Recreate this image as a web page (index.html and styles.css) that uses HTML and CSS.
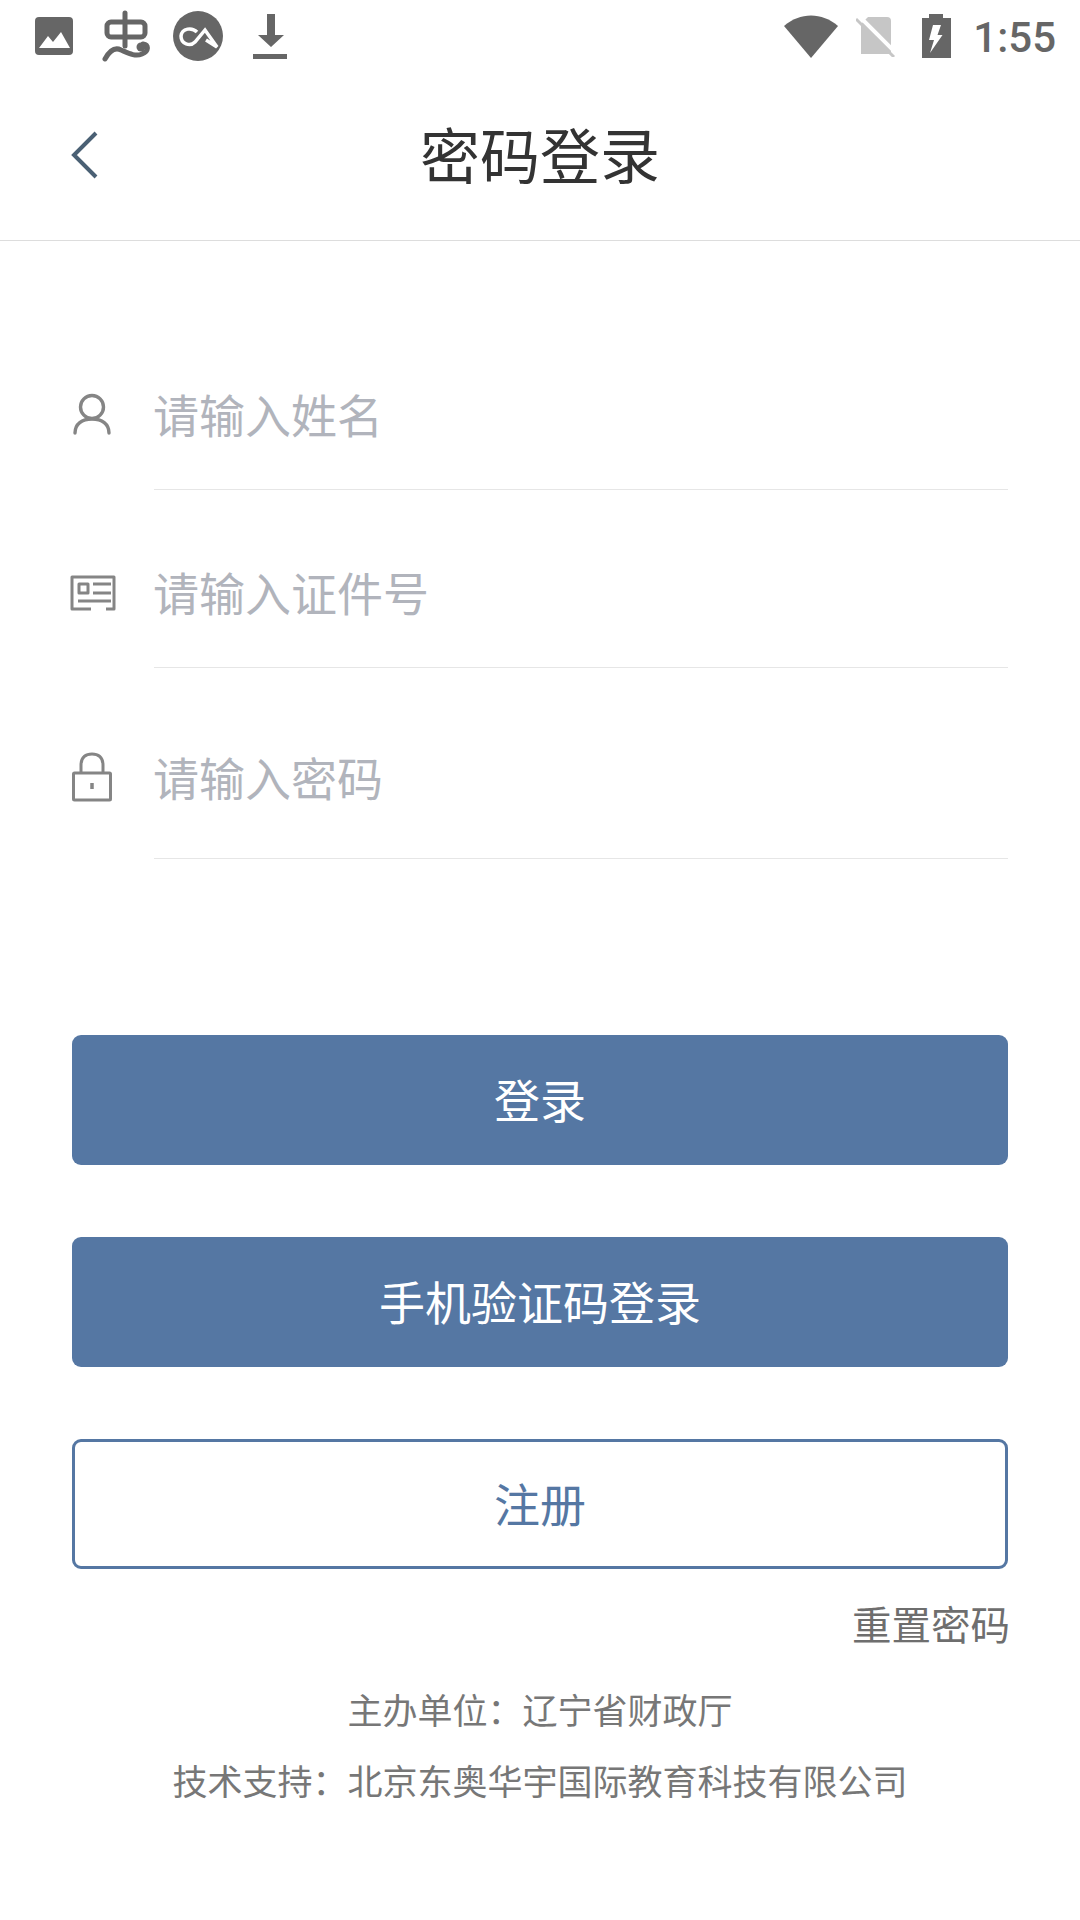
FILE: index.html
```html
<!DOCTYPE html>
<html lang="zh-CN">
<head>
    <meta charset="UTF-8">
    <meta name="viewport" content="width=device-width, initial-scale=1.0">
    <title>密码登录</title>
    <link rel="stylesheet" href="styles.css">
</head>
<body>
    <!-- 状态栏 -->
    <div class="statusbar">
        <div class="status-left">
            <svg class="ic-photo" width="40" height="40" viewBox="0 0 40 40"><rect x="1" y="1" width="38" height="38" rx="4" fill="#666"/><path d="M5 32 L14 20 L19 26 L27 16 L36 32Z" fill="#fff"/></svg>
            <svg class="ic-chong" width="50" height="52" viewBox="0 0 50 52" fill="none" stroke="#666" stroke-width="5" stroke-linecap="round"><rect x="5" y="12" width="38" height="15" rx="4"/><path d="M23 3 V36"/><path d="M3 49 C8 40 13 37 19 40 C26 43 33 47 40 44 C47 41 47 35 41 34"/><circle cx="39" cy="37" r="4.5" fill="#666" stroke="none"/></svg>
            <svg class="ic-ca" width="50" height="50" viewBox="0 0 50 50"><circle cx="25" cy="25" r="25" fill="#666"/><path d="M24 21 C19 16 9 17 8 25 C8 33 17 36 22 31 L32 19 L44 36 L33 29" fill="none" stroke="#fff" stroke-width="3.5"/></svg>
            <svg class="ic-down" width="34" height="45" viewBox="0 0 34 45" fill="#666"><path d="M14 0 H22 V21 H31 L18 33 L5 21 H14 Z"/><rect y="40" width="34" height="5"/></svg>
        </div>
        <div class="status-right">
            <svg class="ic-wifi" width="54" height="43" viewBox="0 0 54 43"><path d="M0 11 C16 -3 38 -3 54 11 L27 43 Z" fill="#666"/></svg>
            <svg class="ic-sim" width="39" height="42" viewBox="0 0 39 42"><path d="M12 2 H31 Q35 2 35 6 V39 H5 V9Z" fill="#c6c6c6"/><path d="M3 1 L41 39" stroke="#fff" stroke-width="4"/><path d="M0 4 L38 42" stroke="#c6c6c6" stroke-width="3"/></svg>
            <svg class="ic-batt" width="29" height="44" viewBox="0 0 29 44"><path d="M7 0 H21 V4 H29 V44 H0 V4 H7Z" fill="#666"/><path d="M11 11 H19 L15.5 21 H20.5 L8 39 L12 26 H7Z" fill="#fff"/></svg>
            <span class="clock">1:55</span>
        </div>
    </div>

    <!-- 标题 -->
    <div class="header">
        <svg class="back" width="30" height="50" viewBox="0 0 30 50"><path d="M26 3 L4 25 L26 47" fill="none" stroke="#4a6074" stroke-width="4"/></svg>
        <h1>密码登录</h1>
    </div>

    <div class="form">
        <div class="row row-name">
            <div class="row-icon"><svg width="46" height="42" viewBox="0 0 46 42" fill="none" stroke="#858585" stroke-width="3.4" stroke-linecap="round"><circle cx="22" cy="14" r="11.5"/><path d="M5 40 C5 31 12 26 22 26 C32 26 39 31 39 40"/></svg></div>
            <div class="field">请输入姓名</div>
        </div>
        <div class="row row-id">
            <div class="row-icon"><svg width="46" height="36" viewBox="0 0 46 36" fill="none" stroke="#858585" stroke-width="3" stroke-linejoin="round"><path d="M21 34 H2 V2 H44 V34 H36"/><rect x="9" y="9" width="9" height="9"/><path d="M23 9 H41 M23 18 H41 M8 26 H41"/></svg></div>
            <div class="field">请输入证件号</div>
        </div>
        <div class="row row-pwd">
            <div class="row-icon"><svg width="46" height="50" viewBox="0 0 46 50" fill="none" stroke="#858585" stroke-width="3" stroke-linejoin="round"><rect x="3.5" y="21" width="37" height="27" rx="1"/><path d="M11 21 V13 C11 5 16 2 22 2 C28 2 33 5 33 13 V21"/><path d="M22 31 V37" stroke-width="3.5"/></svg></div>
            <div class="field">请输入密码</div>
        </div>
    </div>

    <div class="actions">
        <button class="btn btn-fill">登录</button>
        <button class="btn btn-fill">手机验证码登录</button>
        <button class="btn btn-line">注册</button>
    </div>

    <div class="reset">重置密码</div>

    <div class="foot">
        <p>主办单位：辽宁省财政厅</p>
        <p>技术支持：北京东奥华宇国际教育科技有限公司</p>
    </div>
</body>
</html>
```

FILE: styles.css
```css
*{box-sizing: border-box;}
body{margin: 0;width: 1080px;height: 1920px;background: #fff;font-family: "Noto Sans CJK SC","Noto Sans",sans-serif;overflow: hidden;}

.statusbar{height: 72px;display: flex;justify-content: space-between;align-items: center;padding: 0 24px 0 34px;}
.statusbar svg{display: block;}
.status-left{display: flex;align-items: center;}
.status-right{display: flex;align-items: center;}
.ic-chong{margin-left: 28px;}
.ic-ca{margin-left: 21px;}
.ic-down{margin-left: 30px;}
.ic-sim{margin-left: 18px;}
.ic-batt{margin-left: 27px;}
.clock{margin-left: 22px;padding-top: 2px;font-family: Roboto,sans-serif;font-size: 42px;font-weight: 500;color: #666;}

.header{height: 169px;border-bottom: 1px solid #ddd;display: flex;align-items: center;justify-content: center;position: relative;}
.header h1{margin: 0;padding-bottom: 8px;font-size: 60px;font-weight: 400;color: #333;}
.back{position: absolute;left: 70px;top: 58px;}

.form{padding: 0 72px;}
.row{display: flex;align-items: center;}
.row-name{height: 249px;padding-top: 97px;}
.row-id{height: 178px;padding-top: 26px;}
.row-pwd{height: 191px;padding-top: 27px;}
.row-icon{flex: none;width: 82px;margin-left: -2px;margin-right: 2px;display: flex;}
.row-id .row-icon{padding-top: 2px;}
.field{flex: 1;align-self: stretch;display: flex;align-items: center;font-size: 46px;text-indent: -1px;color: #b1b4bc;border-bottom: 1px solid #e6e6e6;}
.row-name .field{margin-top: -97px;padding: 95px 0 0;}
.row-id .field{margin-top: -26px;padding: 24px 0 0;}
.row-pwd .field{margin-top: -27px;padding: 25px 0 0;}

.actions{margin: 176px 72px 0;display: flex;flex-direction: column;gap: 72px;}
.btn{height: 130px;border-radius: 9px;font-family: inherit;font-size: 46px;padding: 0 0 5px;}
.btn-fill{background: #5577a3;border: 0;color: #fff;}
.btn-line{background: #fff;border: 3px solid #5577a3;color: #5577a3;}

.reset{margin: 26px 70px 0 0;text-align: right;font-size: 39.5px;line-height: 56px;color: #6e6e6e;}

.foot{margin-top: 22px;text-align: center;font-size: 35px;line-height: 71px;color: #777;}
.foot p{margin: 0;}
```
